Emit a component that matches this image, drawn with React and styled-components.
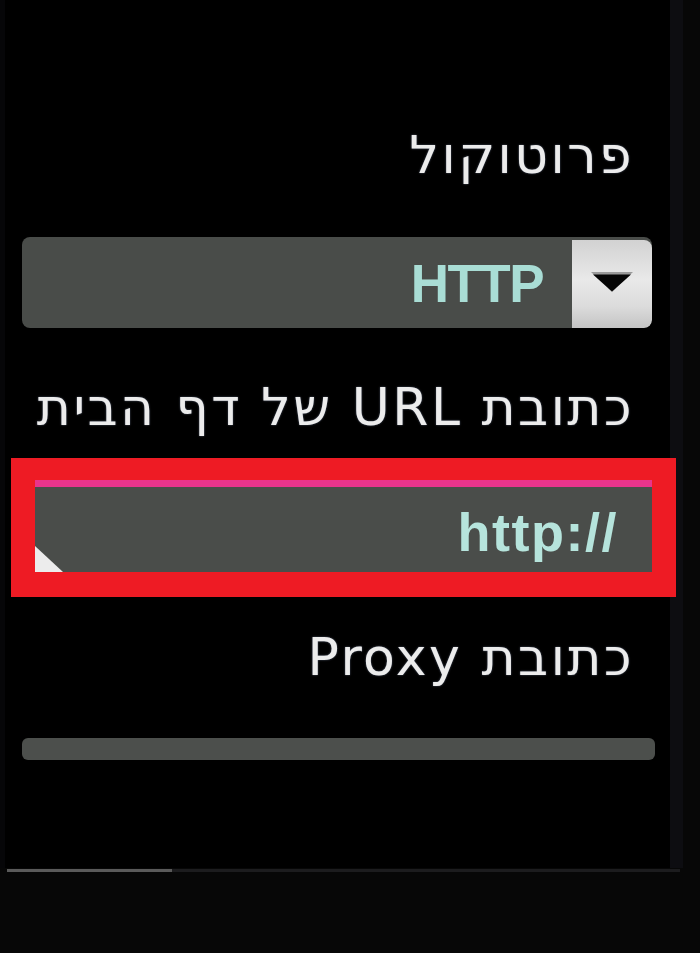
import React from "react";
import styled, { createGlobalStyle } from "styled-components";

const Global = createGlobalStyle`
  html, body { margin: 0; padding: 0; background: #000; }
  body { width: 700px; height: 953px; overflow: hidden; }
`;

const Screen = styled.div`
  width: 700px;
  height: 953px;
  background: #070707;
  display: flex;
  flex-direction: column;
`;

const Panel = styled.div`
  direction: rtl;
  width: 683px;
  height: 868px;
  box-sizing: border-box;
  background: #000;
  border-right: 13px solid #0d0d11;
  border-left: 5px solid #060608;
  padding: 127px 15px 0 17px;
  display: flex;
  flex-direction: column;
`;

const Label = styled.div`
  font-family: "DejaVu Sans", "Liberation Sans", sans-serif;
  font-size: 52px;
  letter-spacing: 2.5px;
  line-height: 56px;
  color: #ececec;
  text-shadow: 0 0 2px rgba(190, 210, 255, 0.45);
  padding-right: 21px;
  margin-top: ${(p) => p.$mt || 0}px;
  white-space: nowrap;
`;

const Select = styled.div`
  margin-top: ${(p) => p.$mt || 0}px;
  height: 91px;
  display: flex;
  border-radius: 8px;
  background: #494c49;
  overflow: hidden;
  margin-right: 3px;
`;

const DropButton = styled.div`
  width: 80px;
  margin: 3px 0 0;
  display: flex;
  align-items: center;
  justify-content: center;
  border-radius: 0 8px 8px 0;
  background: linear-gradient(180deg, #d2d2d2 0%, #e9e9e9 45%, #dcdcdc 75%, #c4c4c4 100%);
  padding-bottom: 4px;
  box-sizing: border-box;
`;

const SelectValue = styled.div`
  flex: 1;
  display: flex;
  align-items: center;
  padding-right: 29px;
  font-family: "Liberation Sans", Arial, sans-serif;
  font-weight: bold;
  font-size: 53px;
  letter-spacing: -1.5px;
  color: #a9ddd5;
  padding-top: 2px;
`;

const FocusFrame = styled.div`
  margin: ${(p) => p.$mt || 0}px -21px 0 -11px;
  border: 24px solid #ee1b24;
  border-top-width: 22px;
  border-bottom-width: 25px;
`;

const Field = styled.div`
  position: relative;
  height: 85px;
  border-top: 7px solid #e9348c;
  background: #4a4d4a;
  display: flex;
  align-items: center;
  padding-right: 34px;
  padding-top: 4px;
  box-sizing: border-box;
  height: 92px;
`;

const FieldText = styled.span`
  direction: ltr;
  unicode-bidi: isolate;
  font-family: "Liberation Sans", Arial, sans-serif;
  font-weight: bold;
  font-size: 54px;
  letter-spacing: 1.5px;
  color: #b6e4dc;
`;

const Corner = styled.span`
  position: absolute;
  left: 0;
  bottom: 0;
  width: 0;
  height: 0;
  border-style: solid;
  border-width: 26px 0 0 28px;
  border-color: transparent transparent transparent #ececec;
`;

const ProxyBar = styled.div`
  margin-top: ${(p) => p.$mt || 0}px;
  height: 22px;
  border-radius: 6px;
  background: #4c4f4c;
`;

const Footer = styled.div`
  flex: 1;
  display: flex;
  align-items: flex-start;
  padding-top: 1px;
`;

const FooterLine = styled.div`
  height: 3px;
  width: ${(p) => p.$w}px;
  margin-left: ${(p) => p.$ml || 0}px;
  background: ${(p) => p.$c};
`;

function Arrow() {
  return (
    <svg width="44" height="22" viewBox="0 0 44 22">
      <path d="M1 1 H43 L22 21 Z" fill="#9a9a9a" />
      <path d="M3 3.5 H41 L22 20.5 Z" fill="#050505" />
    </svg>
  );
}

export default function App() {
  return (
    <>
      <Global />
      <Screen>
        <Panel>
          <Label>פרוטוקול</Label>
          <Select $mt={54}>
            <DropButton>
              <Arrow />
            </DropButton>
            <SelectValue>HTTP</SelectValue>
          </Select>
          <Label $mt={51}>כתובת URL של דף הבית</Label>
          <FocusFrame $mt={23}>
            <Field>
              <Corner />
              <FieldText>http://</FieldText>
            </Field>
          </FocusFrame>
          <Label $mt={32}>כתובת Proxy</Label>
          <ProxyBar $mt={53} />
        </Panel>
        <Footer>
          <FooterLine $w={165} $ml={7} $c="#5a5a5a" />
          <FooterLine $w={508} $c="#1c1c1e" />
        </Footer>
      </Screen>
    </>
  );
}
